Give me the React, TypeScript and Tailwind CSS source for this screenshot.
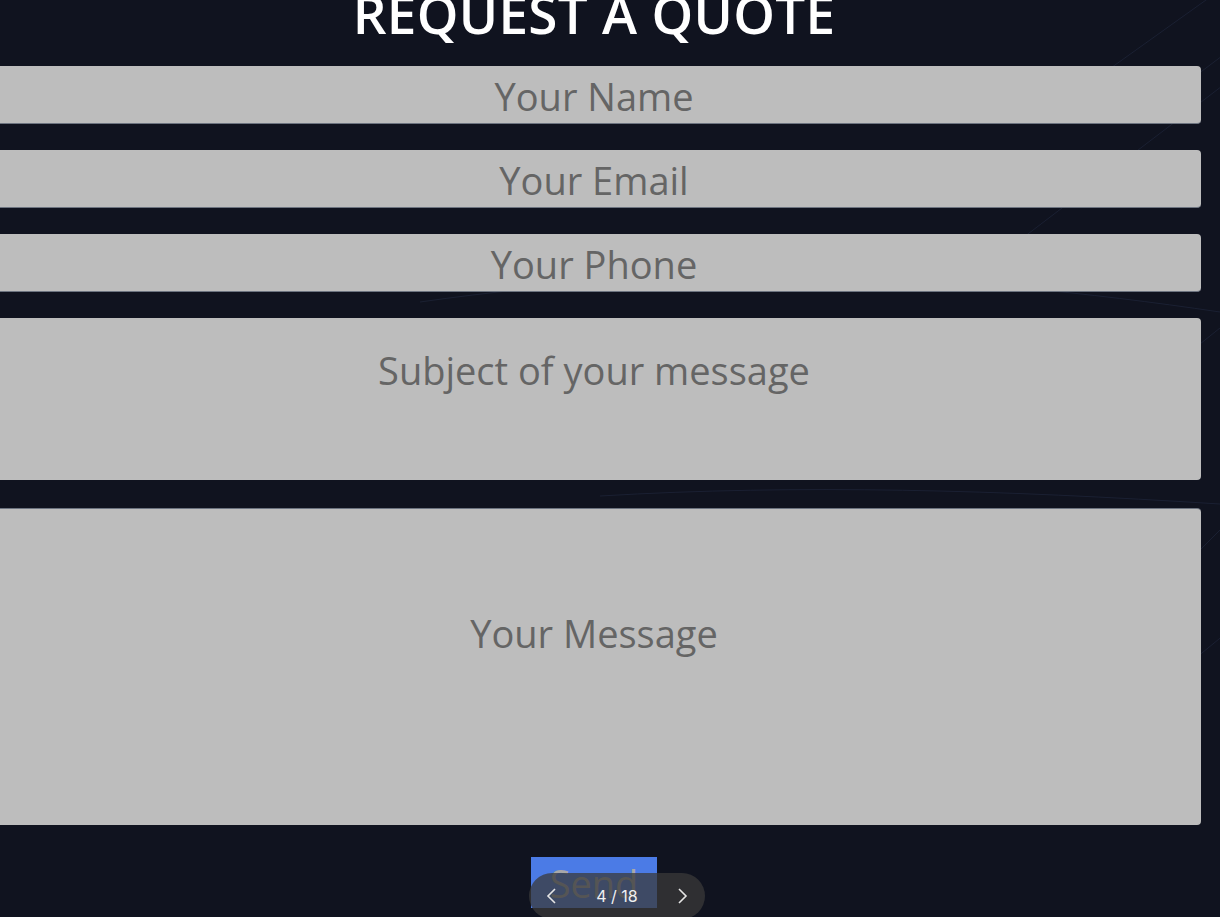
import React from "react";

const fieldBase =
  "block w-full bg-[#bdbdbd] text-center text-[38px] text-[#555] placeholder:text-[#656565] rounded outline-none";

const BackgroundLines = () => (
  <svg
    className="absolute inset-0 w-full h-full pointer-events-none"
    viewBox="0 0 1220 917"
    preserveAspectRatio="none"
  >
    <g stroke="#27304a" strokeWidth="1" fill="none" opacity="0.45">
      <line x1="1080" y1="90" x2="1220" y2="-10" />
      <line x1="1150" y1="110" x2="1230" y2="50" />
      <line x1="1020" y1="240" x2="1230" y2="80" />
      <line x1="1180" y1="360" x2="1230" y2="320" />
      <line x1="1190" y1="560" x2="1230" y2="520" />
      <line x1="1120" y1="720" x2="1230" y2="630" />
      <path d="M 420 302 C 700 262, 950 272, 1220 312" />
      <path d="M 600 496 C 800 484, 1000 490, 1220 504" />
    </g>
  </svg>
);

const App = () => {
  return (
    <div
      className="relative h-screen w-full overflow-hidden bg-[#10131f]"
      style={{ fontFamily: '"Open Sans", "Noto Sans", sans-serif' }}
    >
      <BackgroundLines />

      <div className="relative ml-[-13px] w-[1214px] flex flex-col">
        <h1 className="mt-[-13px] mb-[26px] text-center text-[53px] leading-none font-semibold tracking-[0.3px] text-white">
          REQUEST A QUOTE
        </h1>

        <form className="flex flex-col" onSubmit={(e) => e.preventDefault()}>
          <input
            type="text"
            placeholder="Your Name"
            className={`${fieldBase} h-[58px] pt-[3px] border-b border-[#6d7480]`}
          />
          <input
            type="email"
            placeholder="Your Email"
            className={`${fieldBase} mt-[26px] h-[58px] pt-[3px] border-b border-[#6d7480]`}
          />
          <input
            type="tel"
            placeholder="Your Phone"
            className={`${fieldBase} mt-[26px] h-[58px] pt-[3px] border-b border-[#6d7480]`}
          />
          <textarea
            placeholder="Subject of your message"
            className={`${fieldBase} mt-[26px] h-[162px] pt-[24px] resize-none leading-normal`}
          />
          <textarea
            placeholder="Your Message"
            className={`${fieldBase} mt-[28px] h-[317px] pt-[96px] resize-none leading-normal border-t border-[#6d7480]`}
          />

          <div className="mt-[32px] flex justify-center">
            <button
              type="submit"
              className="w-[126px] h-[51px] bg-[#4b7be6] text-[38px] leading-none text-[#a8a8a8]"
            >
              Send
            </button>
          </div>
        </form>
      </div>

      <div className="absolute left-[529px] top-[873px] h-[46px] w-[176px] rounded-full bg-[#3a3a3a]/75 flex items-center justify-between px-[16px] text-white">
        <svg width="14" height="18" viewBox="0 0 14 18" fill="none">
          <path d="M10 2 L3 9 L10 16" stroke="#e5e5e5" strokeWidth="1.6" />
        </svg>
        <span
          className="text-[16px] text-[#f0f0f0]"
          style={{ fontFamily: "Inter, sans-serif" }}
        >
          4 / 18
        </span>
        <svg width="14" height="18" viewBox="0 0 14 18" fill="none">
          <path d="M4 2 L11 9 L4 16" stroke="#e5e5e5" strokeWidth="1.6" />
        </svg>
      </div>
    </div>
  );
};

export default App;
